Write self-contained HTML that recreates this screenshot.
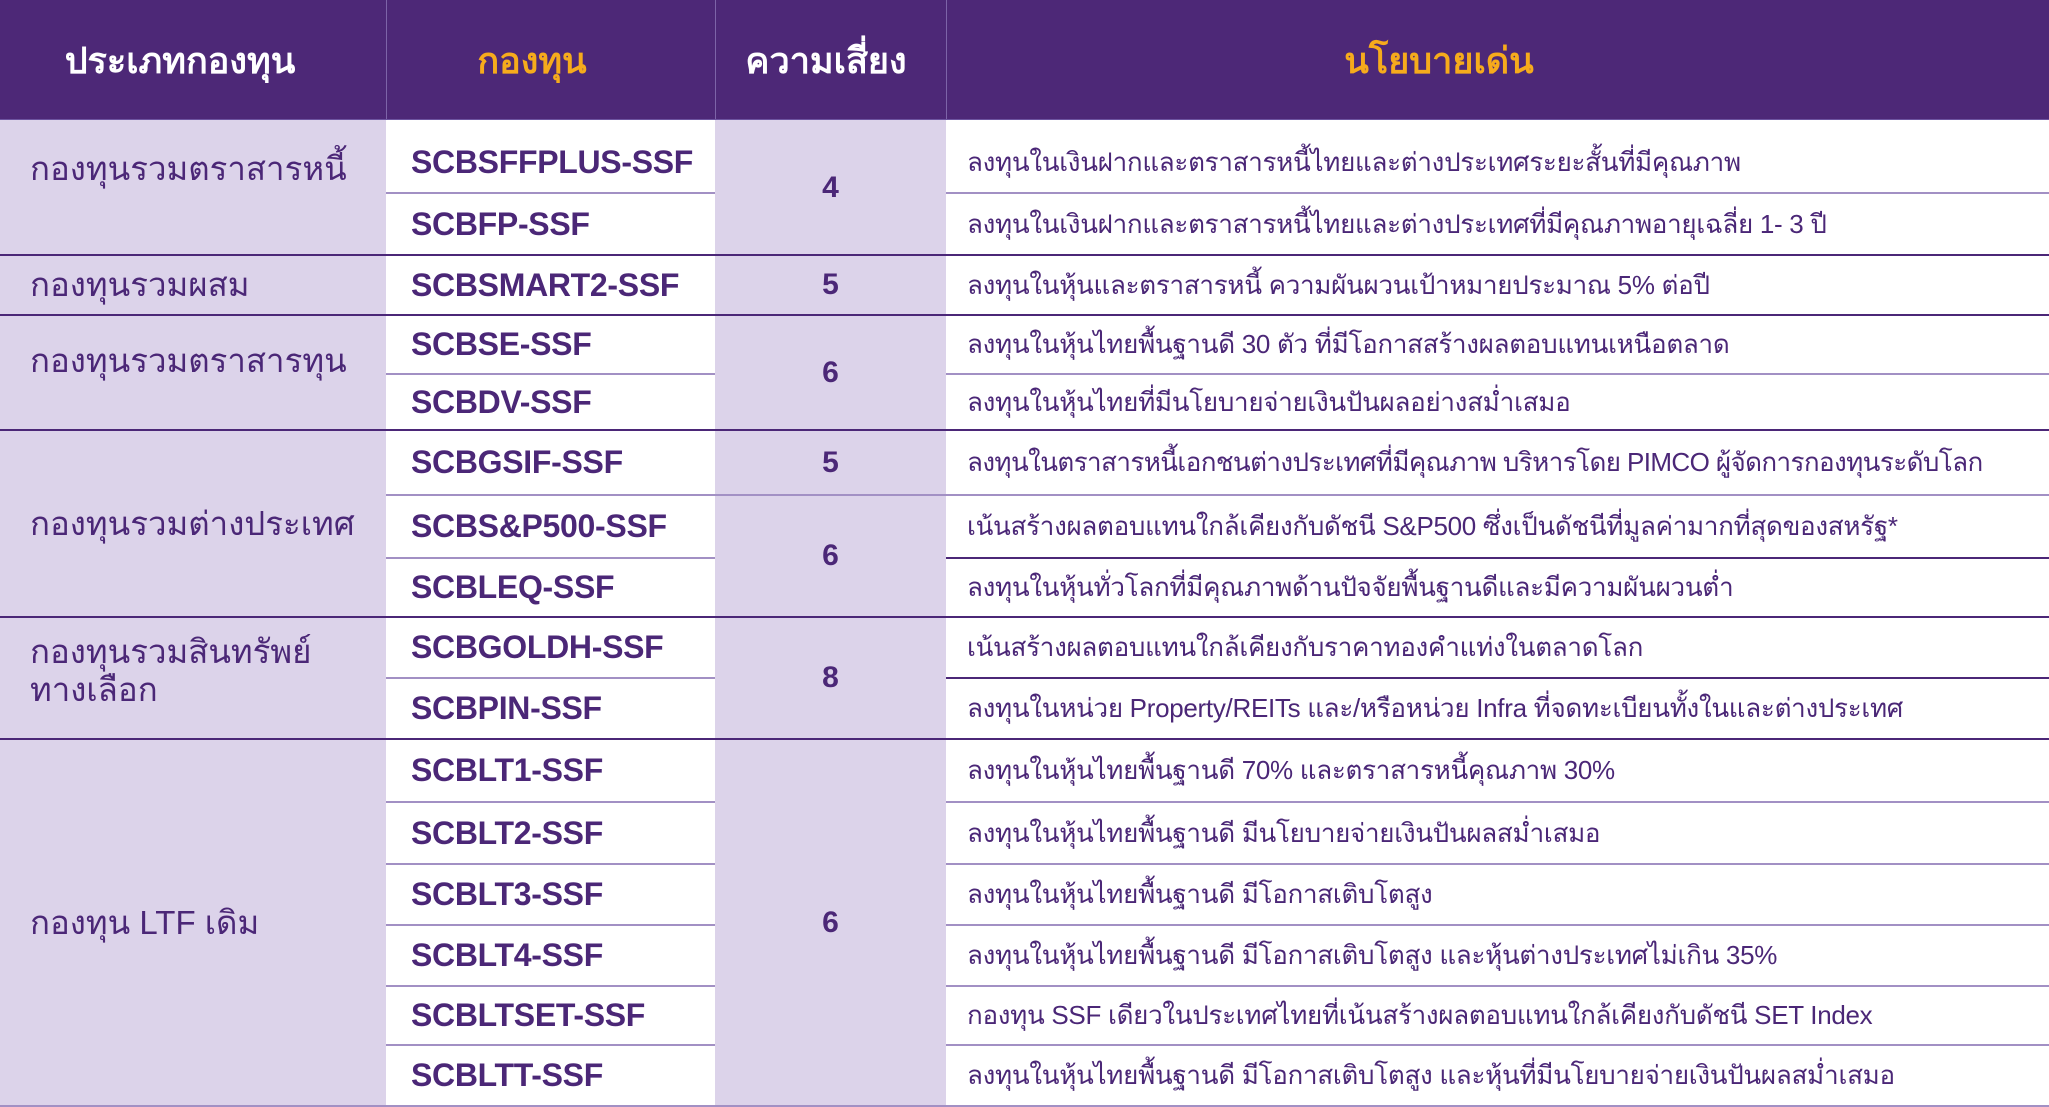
<!DOCTYPE html>
<html><head><meta charset="utf-8"><style>
html,body{margin:0;padding:0;width:2049px;height:1107px;overflow:hidden;background:#fff;}
body{position:relative;font-family:"Liberation Sans",sans-serif;color:#4b2777;}
.a{position:absolute;box-sizing:border-box;display:flex;align-items:center;}
.hd{background:#4d2877;color:#fff;font-weight:bold;font-size:36px;justify-content:center;top:0;height:120px;}
.or{color:#f6ab1c;}
.lp{background:#dcd3ea;}
.cat{font-size:33px;padding-left:30px;line-height:38px;}
.code{font-weight:bold;font-size:32px;padding-left:25px;color:#4b2777;letter-spacing:-0.3px;white-space:nowrap;}
.risk{font-weight:bold;font-size:30px;justify-content:center;}
.desc{font-size:26px;padding-left:21px;white-space:nowrap;letter-spacing:-0.3px;}
.ln{position:absolute;height:2px;}
.dk{background:#4b2777;}
.lt{background:#a290c4;}
</style></head><body>
<div class="a hd" style="left:0;width:386px;padding-right:26px;">ประเภทกองทุน</div>
<div class="a hd or" style="left:386px;width:329px;border-left:1px solid #7d64a8;padding-right:38px;">กองทุน</div>
<div class="a hd" style="left:715px;width:231px;border-left:1px solid #7d64a8;padding-right:10px;">ความเสี่ยง</div>
<div class="a hd or" style="left:946px;width:1103px;border-left:1px solid #7d64a8;padding-right:118px;">นโยบายเด่น</div>

<div class="a lp cat" style="left:0;width:386px;top:120px;height:135px;align-items:flex-start;padding-top:30px;">กองทุนรวมตราสารหนี้</div>
<div class="a lp cat" style="left:0;width:386px;top:255px;height:60px;">กองทุนรวมผสม</div>
<div class="a lp cat" style="left:0;width:386px;top:315px;height:115px;align-items:flex-start;padding-top:27px;">กองทุนรวมตราสารทุน</div>
<div class="a lp cat" style="left:0;width:386px;top:430px;height:187px;">กองทุนรวมต่างประเทศ</div>
<div class="a lp cat" style="left:0;width:386px;top:617px;height:122px;align-items:flex-start;padding-top:16px;">กองทุนรวมสินทรัพย์<br>ทางเลือก</div>
<div class="a lp cat" style="left:0;width:386px;top:739px;height:368px;">กองทุน LTF เดิม</div>

<div class="a lp risk" style="left:715px;width:231px;top:120px;height:135px;">4</div>
<div class="a lp risk" style="left:715px;width:231px;top:255px;height:60px;">5</div>
<div class="a lp risk" style="left:715px;width:231px;top:315px;height:115px;">6</div>
<div class="a lp risk" style="left:715px;width:231px;top:430px;height:65px;">5</div>
<div class="a lp risk" style="left:715px;width:231px;top:495px;height:122px;">6</div>
<div class="a lp risk" style="left:715px;width:231px;top:617px;height:122px;">8</div>
<div class="a lp risk" style="left:715px;width:231px;top:739px;height:368px;">6</div>

<div class="a code" style="left:386px;width:329px;top:120px;height:73px;padding-top:12px;">SCBSFFPLUS-SSF</div>
<div class="a code" style="left:386px;width:329px;top:193px;height:62px;">SCBFP-SSF</div>
<div class="a code" style="left:386px;width:329px;top:255px;height:60px;">SCBSMART2-SSF</div>
<div class="a code" style="left:386px;width:329px;top:315px;height:59px;">SCBSE-SSF</div>
<div class="a code" style="left:386px;width:329px;top:374px;height:56px;">SCBDV-SSF</div>
<div class="a code" style="left:386px;width:329px;top:430px;height:65px;">SCBGSIF-SSF</div>
<div class="a code" style="left:386px;width:329px;top:495px;height:63px;">SCBS&amp;P500-SSF</div>
<div class="a code" style="left:386px;width:329px;top:558px;height:59px;">SCBLEQ-SSF</div>
<div class="a code" style="left:386px;width:329px;top:617px;height:61px;">SCBGOLDH-SSF</div>
<div class="a code" style="left:386px;width:329px;top:678px;height:61px;">SCBPIN-SSF</div>
<div class="a code" style="left:386px;width:329px;top:739px;height:63px;">SCBLT1-SSF</div>
<div class="a code" style="left:386px;width:329px;top:802px;height:62px;">SCBLT2-SSF</div>
<div class="a code" style="left:386px;width:329px;top:864px;height:61px;">SCBLT3-SSF</div>
<div class="a code" style="left:386px;width:329px;top:925px;height:61px;">SCBLT4-SSF</div>
<div class="a code" style="left:386px;width:329px;top:986px;height:59px;">SCBLTSET-SSF</div>
<div class="a code" style="left:386px;width:329px;top:1045px;height:60px;">SCBLTT-SSF</div>

<div class="a desc" style="left:946px;width:1103px;top:120px;height:73px;padding-top:12px;">ลงทุนในเงินฝากและตราสารหนี้ไทยและต่างประเทศระยะสั้นที่มีคุณภาพ</div>
<div class="a desc" style="left:946px;width:1103px;top:193px;height:62px;">ลงทุนในเงินฝากและตราสารหนี้ไทยและต่างประเทศที่มีคุณภาพอายุเฉลี่ย 1- 3 ปี</div>
<div class="a desc" style="left:946px;width:1103px;top:255px;height:60px;">ลงทุนในหุ้นและตราสารหนี้ ความผันผวนเป้าหมายประมาณ 5% ต่อปี</div>
<div class="a desc" style="left:946px;width:1103px;top:315px;height:59px;">ลงทุนในหุ้นไทยพื้นฐานดี 30 ตัว ที่มีโอกาสสร้างผลตอบแทนเหนือตลาด</div>
<div class="a desc" style="left:946px;width:1103px;top:374px;height:56px;">ลงทุนในหุ้นไทยที่มีนโยบายจ่ายเงินปันผลอย่างสม่ำเสมอ</div>
<div class="a desc" style="left:946px;width:1103px;top:430px;height:65px;letter-spacing:-0.6px;">ลงทุนในตราสารหนี้เอกชนต่างประเทศที่มีคุณภาพ บริหารโดย PIMCO ผู้จัดการกองทุนระดับโลก</div>
<div class="a desc" style="left:946px;width:1103px;top:495px;height:63px;">เน้นสร้างผลตอบแทนใกล้เคียงกับดัชนี S&amp;P500 ซึ่งเป็นดัชนีที่มูลค่ามากที่สุดของสหรัฐ*</div>
<div class="a desc" style="left:946px;width:1103px;top:558px;height:59px;">ลงทุนในหุ้นทั่วโลกที่มีคุณภาพด้านปัจจัยพื้นฐานดีและมีความผันผวนต่ำ</div>
<div class="a desc" style="left:946px;width:1103px;top:617px;height:61px;">เน้นสร้างผลตอบแทนใกล้เคียงกับราคาทองคำแท่งในตลาดโลก</div>
<div class="a desc" style="left:946px;width:1103px;top:678px;height:61px;">ลงทุนในหน่วย Property/REITs และ/หรือหน่วย Infra ที่จดทะเบียนทั้งในและต่างประเทศ</div>
<div class="a desc" style="left:946px;width:1103px;top:739px;height:63px;">ลงทุนในหุ้นไทยพื้นฐานดี 70% และตราสารหนี้คุณภาพ 30%</div>
<div class="a desc" style="left:946px;width:1103px;top:802px;height:62px;">ลงทุนในหุ้นไทยพื้นฐานดี มีนโยบายจ่ายเงินปันผลสม่ำเสมอ</div>
<div class="a desc" style="left:946px;width:1103px;top:864px;height:61px;">ลงทุนในหุ้นไทยพื้นฐานดี มีโอกาสเติบโตสูง</div>
<div class="a desc" style="left:946px;width:1103px;top:925px;height:61px;">ลงทุนในหุ้นไทยพื้นฐานดี มีโอกาสเติบโตสูง และหุ้นต่างประเทศไม่เกิน 35%</div>
<div class="a desc" style="left:946px;width:1103px;top:986px;height:59px;">กองทุน SSF เดียวในประเทศไทยที่เน้นสร้างผลตอบแทนใกล้เคียงกับดัชนี SET Index</div>
<div class="a desc" style="left:946px;width:1103px;top:1045px;height:60px;">ลงทุนในหุ้นไทยพื้นฐานดี มีโอกาสเติบโตสูง และหุ้นที่มีนโยบายจ่ายเงินปันผลสม่ำเสมอ</div>

<div class="ln dk" style="left:0;width:2049px;top:254px;"></div>
<div class="ln dk" style="left:0;width:2049px;top:314px;"></div>
<div class="ln dk" style="left:0;width:2049px;top:429px;"></div>
<div class="ln dk" style="left:0;width:2049px;top:616px;"></div>
<div class="ln dk" style="left:0;width:2049px;top:738px;"></div>
<div class="ln lt" style="left:0;width:2049px;top:1105px;"></div>
<div class="ln lt" style="left:386px;width:329px;top:192px;"></div>
<div class="ln lt" style="left:946px;width:1103px;top:192px;"></div>
<div class="ln lt" style="left:386px;width:329px;top:373px;"></div>
<div class="ln lt" style="left:946px;width:1103px;top:373px;"></div>
<div class="ln lt" style="left:386px;width:1663px;top:494px;"></div>
<div class="ln lt" style="left:386px;width:329px;top:557px;"></div>
<div class="ln dk" style="left:946px;width:1103px;top:557px;"></div>
<div class="ln lt" style="left:386px;width:329px;top:677px;"></div>
<div class="ln dk" style="left:946px;width:1103px;top:677px;"></div>
<div class="ln lt" style="left:386px;width:329px;top:801px;"></div>
<div class="ln lt" style="left:946px;width:1103px;top:801px;"></div>
<div class="ln lt" style="left:386px;width:329px;top:863px;"></div>
<div class="ln lt" style="left:946px;width:1103px;top:863px;"></div>
<div class="ln lt" style="left:386px;width:329px;top:924px;"></div>
<div class="ln lt" style="left:946px;width:1103px;top:924px;"></div>
<div class="ln lt" style="left:386px;width:329px;top:985px;"></div>
<div class="ln lt" style="left:946px;width:1103px;top:985px;"></div>
<div class="ln lt" style="left:386px;width:329px;top:1044px;"></div>
<div class="ln lt" style="left:946px;width:1103px;top:1044px;"></div>
<div class="ln" style="left:0;width:2049px;top:119px;height:1px;background:#6d54a0;"></div>
</body></html>
